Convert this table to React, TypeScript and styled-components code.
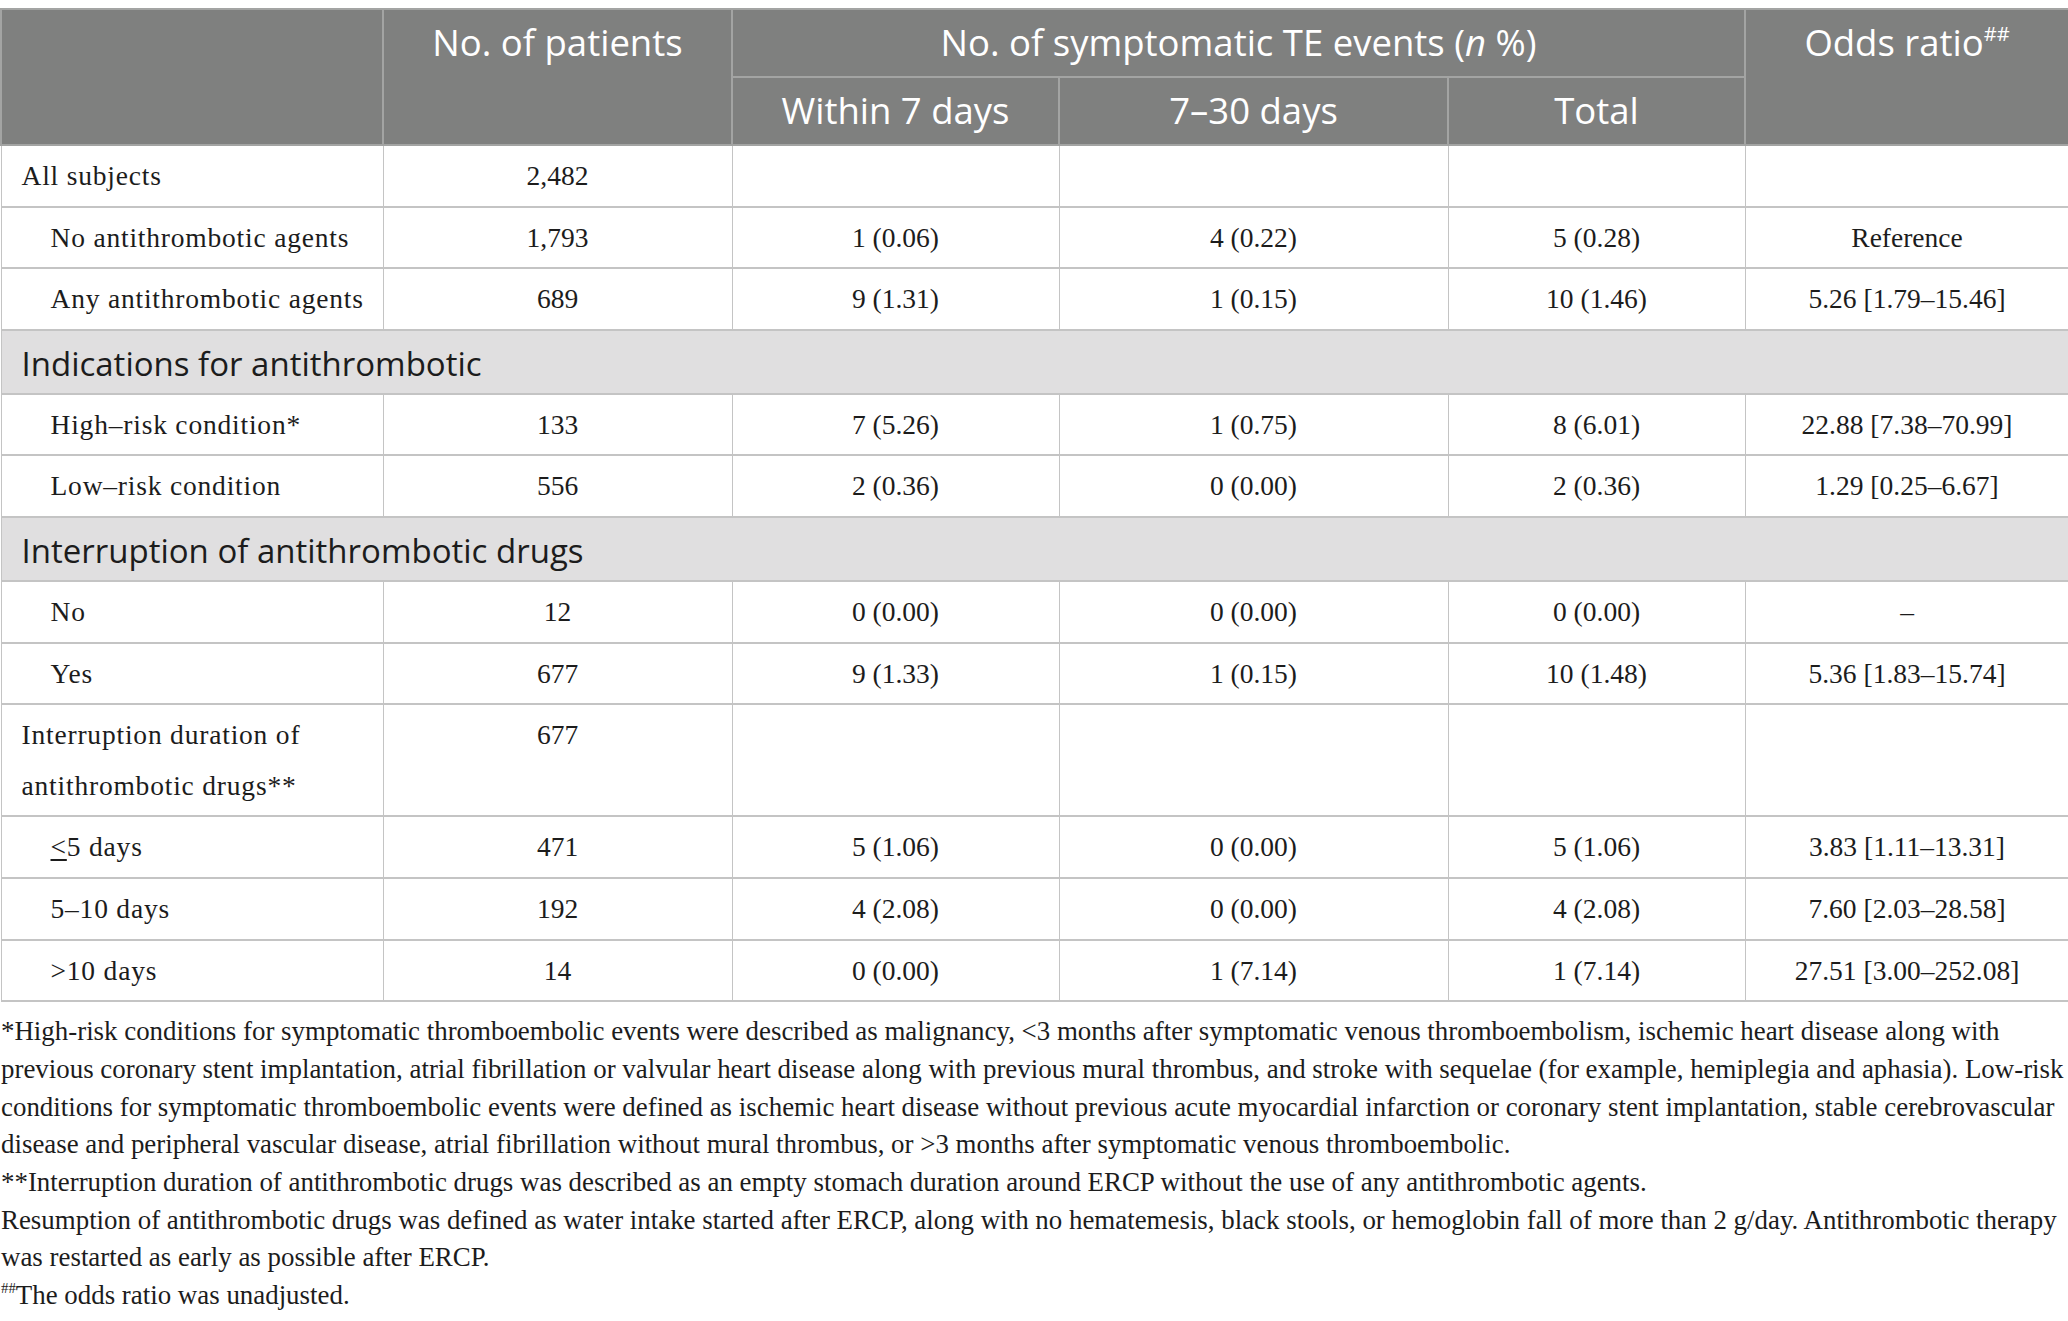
import React from "react";
import styled, { createGlobalStyle } from "styled-components";

const Global = createGlobalStyle`
  html, body { margin: 0; padding: 0; background: #ffffff; }
  body { width: 2068px; }
`;

const Page = styled.div`
  padding-top: 8px;
  width: 2068px;
  box-sizing: border-box;
`;

const Table = styled.table`
  width: 2068px;
  border-collapse: collapse;
  table-layout: fixed;
  border-top: 2px solid #c4c4c4;
  border-left: 1px solid #c4c4c4;
  border-right: 1px solid #c4c4c4;
  border-bottom: 2px solid #c4c4c4;
`;

const HeadCell = styled.th<{ $top?: boolean }>`
  background: #7f807f;
  color: #ffffff;
  font-family: "Open Sans", "Noto Sans", sans-serif;
  font-weight: 400;
  font-size: 36.5px;
  line-height: 44px;
  text-align: center;
  vertical-align: ${(p) => (p.$top ? "top" : "middle")};
  padding: 10px 8px 12px;
  border: 2px solid #a3a4a3;
  white-space: nowrap;
`;

const Sup = styled.sup`
  font-size: 0.55em;
  vertical-align: 0.75em;
  line-height: 0;
`;

const Row = styled.tr``;

const Cell = styled.td<{ $indent?: boolean; $left?: boolean; $top?: boolean }>`
  font-family: "Liberation Serif", "Times New Roman", serif;
  font-size: 27.5px;
  line-height: 50.6px;
  letter-spacing: ${(p) => (p.$left ? "0.8px" : "0")};
  color: #1c1c1c;
  text-align: ${(p) => (p.$left ? "left" : "center")};
  vertical-align: ${(p) => (p.$top ? "top" : "middle")};
  padding: 5px 8px 4px ${(p) => (p.$indent ? "49px" : p.$left ? "20px" : "8px")};
  border-top: 2px solid #c4c4c4;
  border-bottom: 2px solid #c4c4c4;
  border-left: 1px solid #c4c4c4;
  border-right: 1px solid #c4c4c4;
  white-space: nowrap;
`;

const SectionCell = styled.td`
  background: #e0dfe0;
  font-family: "Open Sans", "Noto Sans", sans-serif;
  font-size: 33px;
  line-height: 50px;
  color: #1c1c1c;
  text-align: left;
  padding: 8px 8px 4px 20px;
  border-top: 2px solid #c4c4c4;
  border-bottom: 2px solid #c4c4c4;
`;

const Notes = styled.div`
  font-family: "Liberation Serif", "Times New Roman", serif;
  font-size: 26.9px;
  line-height: 37.7px;
  color: #1c1c1c;
  padding: 11px 0 0 1px;
  white-space: nowrap;
`;

const NoteLine = styled.div``;

const Under = styled.span`
  text-decoration: underline;
  text-underline-offset: 3px;
`;

type DataRow = {
  label: React.ReactNode;
  indent?: boolean;
  top?: boolean;
  cells: string[];
};

const groups: (DataRow | { section: string })[] = [
  { label: "All subjects", cells: ["2,482", "", "", "", ""] },
  { label: "No antithrombotic agents", indent: true, cells: ["1,793", "1 (0.06)", "4 (0.22)", "5 (0.28)", "Reference"] },
  { label: "Any antithrombotic agents", indent: true, cells: ["689", "9 (1.31)", "1 (0.15)", "10 (1.46)", "5.26 [1.79–15.46]"] },
  { section: "Indications for antithrombotic" },
  { label: "High–risk condition*", indent: true, cells: ["133", "7 (5.26)", "1 (0.75)", "8 (6.01)", "22.88 [7.38–70.99]"] },
  { label: "Low–risk condition", indent: true, cells: ["556", "2 (0.36)", "0 (0.00)", "2 (0.36)", "1.29 [0.25–6.67]"] },
  { section: "Interruption of antithrombotic drugs" },
  { label: "No", indent: true, cells: ["12", "0 (0.00)", "0 (0.00)", "0 (0.00)", "–"] },
  { label: "Yes", indent: true, cells: ["677", "9 (1.33)", "1 (0.15)", "10 (1.48)", "5.36 [1.83–15.74]"] },
  {
    label: (
      <>
        Interruption duration of
        <br />
        antithrombotic drugs**
      </>
    ),
    top: true,
    cells: ["677", "", "", "", ""],
  },
  {
    label: (
      <>
        <Under>&lt;</Under>5 days
      </>
    ),
    indent: true,
    cells: ["471", "5 (1.06)", "0 (0.00)", "5 (1.06)", "3.83 [1.11–13.31]"],
  },
  { label: "5–10 days", indent: true, cells: ["192", "4 (2.08)", "0 (0.00)", "4 (2.08)", "7.60 [2.03–28.58]"] },
  { label: ">10 days", indent: true, cells: ["14", "0 (0.00)", "1 (7.14)", "1 (7.14)", "27.51 [3.00–252.08]"] },
];

const widths = [382, 349, 327, 389, 297, 324];

export default function App() {
  return (
    <Page>
      <Global />
      <Table>
        <colgroup>
          {widths.map((w, i) => (
            <col key={i} style={{ width: w }} />
          ))}
        </colgroup>
        <thead>
          <tr>
            <HeadCell rowSpan={2} />
            <HeadCell rowSpan={2} $top>
              No. of patients
            </HeadCell>
            <HeadCell colSpan={3}>
              No. of symptomatic TE events (<i>n</i> %)
            </HeadCell>
            <HeadCell rowSpan={2} $top>
              Odds ratio<Sup>##</Sup>
            </HeadCell>
          </tr>
          <tr>
            <HeadCell>Within 7 days</HeadCell>
            <HeadCell>7–30 days</HeadCell>
            <HeadCell>Total</HeadCell>
          </tr>
        </thead>
        <tbody>
          {groups.map((g, i) =>
            "section" in g ? (
              <Row key={i}>
                <SectionCell colSpan={6}>{g.section}</SectionCell>
              </Row>
            ) : (
              <Row key={i}>
                <Cell $left $indent={g.indent} $top={g.top}>
                  {g.label}
                </Cell>
                {g.cells.map((c, j) => (
                  <Cell key={j} $top={g.top}>
                    {c}
                  </Cell>
                ))}
              </Row>
            )
          )}
        </tbody>
      </Table>
      <Notes>
        <NoteLine>
          *High-risk conditions for symptomatic thromboembolic events were described as malignancy, &lt;3 months after symptomatic venous thromboembolism, ischemic heart disease along with
        </NoteLine>
        <NoteLine>
          previous coronary stent implantation, atrial fibrillation or valvular heart disease along with previous mural thrombus, and stroke with sequelae (for example, hemiplegia and aphasia). Low-risk
        </NoteLine>
        <NoteLine>
          conditions for symptomatic thromboembolic events were defined as ischemic heart disease without previous acute myocardial infarction or coronary stent implantation, stable cerebrovascular
        </NoteLine>
        <NoteLine>
          disease and peripheral vascular disease, atrial fibrillation without mural thrombus, or &gt;3 months after symptomatic venous thromboembolic.
        </NoteLine>
        <NoteLine>
          **Interruption duration of antithrombotic drugs was described as an empty stomach duration around ERCP without the use of any antithrombotic agents.
        </NoteLine>
        <NoteLine>
          Resumption of antithrombotic drugs was defined as water intake started after ERCP, along with no hematemesis, black stools, or hemoglobin fall of more than 2 g/day. Antithrombotic therapy
        </NoteLine>
        <NoteLine>was restarted as early as possible after ERCP.</NoteLine>
        <NoteLine>
          <Sup>##</Sup>The odds ratio was unadjusted.
        </NoteLine>
      </Notes>
    </Page>
  );
}
